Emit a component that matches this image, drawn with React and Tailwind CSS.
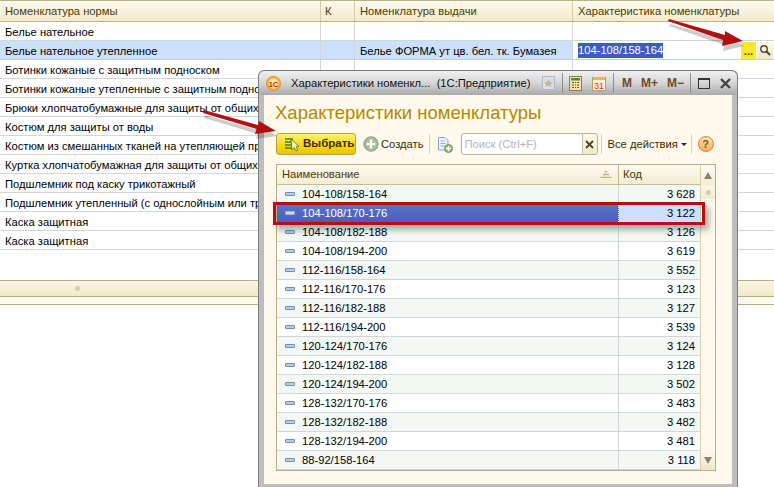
import React from 'react';

const normRows = [
  'Белье нательное',
  'Белье нательное утепленное',
  'Ботинки кожаные с защитным подноском',
  'Ботинки кожаные утепленные с защитным подноском',
  'Брюки хлопчатобумажные для защиты от общих производственных загрязнений',
  'Костюм для защиты от воды',
  'Костюм из смешанных тканей на утепляющей прокладке',
  'Куртка хлопчатобумажная для защиты от общих производственных загрязнений',
  'Подшлемник под каску трикотажный',
  'Подшлемник утепленный (с однослойным или трехслойным)',
  'Каска защитная',
  'Каска защитная',
];

const sizes = [
  ['104-108/158-164', '3 628'],
  ['104-108/170-176', '3 122'],
  ['104-108/182-188', '3 126'],
  ['104-108/194-200', '3 619'],
  ['112-116/158-164', '3 552'],
  ['112-116/170-176', '3 123'],
  ['112-116/182-188', '3 127'],
  ['112-116/194-200', '3 539'],
  ['120-124/170-176', '3 124'],
  ['120-124/182-188', '3 128'],
  ['120-124/194-200', '3 502'],
  ['128-132/170-176', '3 483'],
  ['128-132/182-188', '3 482'],
  ['128-132/194-200', '3 481'],
  ['88-92/158-164', '3 118'],
];

function BackRow({ name, active }) {
  return (
    <div className={`flex h-[19px] border-b ${active ? 'bg-[#cde0fb] border-[#b9d0ea]' : 'bg-white border-[#ced8dc]'}`}>
      <div className="w-[321px] pl-[5px] leading-[20px] whitespace-nowrap overflow-hidden border-r border-[#ced8dc]">{name}</div>
      <div className="w-[34px] border-r border-[#ced8dc]" />
      <div className="w-[218px] pl-[5px] leading-[20px] whitespace-nowrap border-r border-[#ced8dc]">
        {active ? 'Белье ФОРМА ут цв. бел. тк. Бумазея' : ''}
      </div>
      {active ? (
        <div className="flex flex-1 items-center pl-[5px] pr-[1px] bg-white">
          <span className="bg-[#3c5cc4] text-white leading-[15px]">104-108/158-164</span>
          <div className="flex-1" />
          <div className="w-[15px] h-[17px] bg-[#f6ea2c] text-[#5a4a00] font-bold text-center leading-[18px]">...</div>
          <div className="flex w-[16px] h-[17px] ml-[1px] items-center justify-center bg-gradient-to-b from-[#fdf8e6] to-[#efe6c4]">
            <svg width="12" height="12" viewBox="0 0 12 12" fill="none" stroke="#4a4630" strokeWidth="1.4">
              <circle cx="5" cy="5" r="3.2" />
              <path d="M7.5 7.5L11 11" strokeWidth="2" />
            </svg>
          </div>
        </div>
      ) : (
        <div className="flex-1" />
      )}
    </div>
  );
}

function Arrow({ className, width, height, d }) {
  return (
    <svg className={`absolute ${className}`} width={width} height={height} viewBox={`0 0 ${width} ${height}`}>
      <path d={d} fill="#000" opacity="0.2" transform="translate(1 5)" />
      <path d={d} fill="#b30f13" />
    </svg>
  );
}

function LogoIcon() {
  return (
    <svg width="15" height="15" viewBox="0 0 15 15">
      <circle cx="7.5" cy="7.5" r="7" fill="#f4b43c" stroke="#d9902c" />
      <circle cx="7.5" cy="7.5" r="5" fill="#fde6a8" />
      <text x="7.5" y="10.5" textAnchor="middle" fontSize="8" fontWeight="bold" fontFamily="Liberation Sans" fill="#d8261c">1С</text>
    </svg>
  );
}

function TitleBar() {
  return (
    <div className="flex h-[24px] items-center pl-[7px] bg-gradient-to-b from-[#f0f0f0] via-[#d6d6d6] to-[#a9a9a9] rounded-t-[6px]">
      <LogoIcon />
      <span className="ml-[10px] w-[234px] text-[#111] whitespace-nowrap">Характеристики номенкл...&nbsp; (1С:Предприятие)</span>
      <svg className="ml-[17px]" width="13" height="14" viewBox="0 0 13 14">
        <rect x="0.5" y="0.5" width="12" height="13" fill="#d7dfe8" stroke="#aebccb" />
        <path d="M6.5 3L8 6L11 6.4L8.8 8.4L9.4 11L6.5 9.6L3.6 11L4.2 8.4L2 6.4L5 6Z" fill="#c4b890" />
      </svg>
      <div className="w-px h-[20px] ml-[7px] bg-[#8f8f8f]" />
      <svg className="ml-[6px]" width="13" height="15" viewBox="0 0 13 15">
        <rect x="0.5" y="0.5" width="12" height="14" fill="#f4dfae" stroke="#9a7a44" />
        <rect x="2" y="2" width="9" height="2.5" fill="#3e8f3e" />
        <path d="M3 6.5h2M6 6.5h1M8 6.5h2M3 9h2M6 9h1M8 9h2M3 11.5h2M6 11.5h1M8 11.5h2" stroke="#6d5330" />
      </svg>
      <svg className="ml-[10px]" width="14" height="15" viewBox="0 0 14 15">
        <rect x="0.5" y="1.5" width="13" height="13" fill="#fdf3dc" stroke="#c29a62" />
        <rect x="1" y="1" width="12" height="3" fill="#e2b678" />
        <text x="7" y="13" textAnchor="middle" fontSize="9" fontFamily="Liberation Sans" fill="#e0281c">31</text>
      </svg>
      <div className="w-px h-[20px] ml-[7px] bg-[#8f8f8f]" />
      <div className="flex ml-[8px] gap-[9px] text-[12px] font-bold text-[#74492a] leading-none">
        <span>M</span>
        <span>M+</span>
        <span>M−</span>
      </div>
      <div className="w-px h-[20px] ml-[6px] bg-[#8f8f8f]" />
      <div className="w-[12px] h-[11px] ml-[7px] border border-[#333] border-t-2" />
      <svg className="ml-[10px]" width="11" height="11" viewBox="0 0 11 11">
        <path d="M1 1L10 10M10 1L1 10" stroke="#444" strokeWidth="2.4" />
      </svg>
    </div>
  );
}

function Toolbar() {
  return (
    <div className="flex h-[22px] items-center mt-[9px] ml-[12px]">
      <button className="flex w-[80px] h-[22px] items-center pl-[6px] rounded-[3px] border border-[#b5a24a] bg-gradient-to-b from-[#fff16a] via-[#f7dc12] to-[#e8c400] font-bold text-[11.5px] text-[#3d2f00]">
        <svg width="17" height="16" viewBox="0 0 17 16" fill="none">
          <path d="M2 3h8M2 6h8M2 9h8M2 12h8" stroke="#4d7d28" strokeWidth="1.6" />
          <path d="M8 3l1 11 2.2-2.4L13 15l1.8-1-1.8-3.2 3-.4Z" fill="#f6f2b0" stroke="#47701f" strokeWidth="0.8" />
        </svg>
        <span className="ml-[3px]">Выбрать</span>
      </button>
      <svg className="ml-[7px]" width="16" height="16" viewBox="0 0 16 16">
        <circle cx="8" cy="8" r="7.2" fill="#a4bf94" stroke="#8a9a86" />
        <path d="M8 3.6v8.8M3.6 8h8.8" stroke="#fff" strokeWidth="2.4" />
      </svg>
      <span className="ml-[2px] text-[#3a2c00]">Создать</span>
      <div className="w-px h-[20px] ml-[5px] bg-[#d9d2b4]" />
      <svg className="ml-[7px]" width="16" height="17" viewBox="0 0 16 17">
        <path d="M1.5 1.5H8L11 4.5V14H1.5Z" fill="#eef2f8" stroke="#8fa3bf" />
        <path d="M3.5 5h4M3.5 7.5h5M3.5 10h5" stroke="#9ab0cc" />
        <circle cx="11.5" cy="12.5" r="4" fill="#8dbb77" stroke="#709a60" />
        <path d="M11.5 10v5M9 12.5h5" stroke="#fff" strokeWidth="1.4" />
      </svg>
      <div className="flex w-[137px] h-[22px] ml-[8px] rounded-[3px] border border-[#b9b28c] bg-white">
        <span className="flex-1 pl-[3px] text-[#b4b4b4] leading-[20px] whitespace-nowrap">Поиск (Ctrl+F)</span>
        <div className="flex w-[15px] items-center justify-center border-l border-[#c9c3a2] bg-gradient-to-b from-[#fdf9ea] to-[#efe8cc] rounded-r-[3px]">
          <svg width="9" height="9" viewBox="0 0 9 9">
            <path d="M1 1L8 8M8 1L1 8" stroke="#4a4420" strokeWidth="1.8" />
          </svg>
        </div>
      </div>
      <div className="w-px h-[20px] ml-[3px] bg-[#d9d2b4]" />
      <span className="ml-[6px] w-[69px] text-[#3a2c00] whitespace-nowrap">Все действия</span>
      <span className="ml-[4px] w-0 h-0 border-x-[3px] border-x-transparent border-t-[3px] border-t-[#3a2c00]" />
      <div className="w-px h-[20px] ml-[4px] bg-[#d9d2b4]" />
      <div className="flex w-[16px] h-[16px] ml-[6px] items-center justify-center rounded-full border border-[#c48a40] bg-gradient-to-b from-[#fde3b0] to-[#f2aa52] text-[#7a5a2a] font-bold text-[11px] leading-none">?</div>
    </div>
  );
}

function SizeTable() {
  return (
    <div className="flex h-[307px] ml-[12px] mt-[9px] mr-[16px] border border-[#b9ae80] bg-white">
      <div className="flex-1 flex flex-col">
        <div className="flex h-[20px] border-b border-[#c9bd8c] bg-gradient-to-b from-[#fefaf0] to-[#f5ecd2] text-[#4a3a00] leading-[19px]">
          <div className="flex w-[342px] items-center justify-between pl-[5px] pr-[6px] border-r border-[#c9bd8c]">
            <span>Наименование</span>
            <svg width="12" height="7" viewBox="0 0 12 7">
              <path d="M4.5 0.5h3M3 3.5h6M0.5 6.5h11" stroke="#bfb484" strokeWidth="1.4" />
            </svg>
          </div>
          <div className="flex-1 pl-[4px]">Код</div>
        </div>
        {sizes.map(([name, code], i) => {
          const sel = i === 1;
          const rowBg = i % 2 === 0 ? 'bg-[#f3f8f4]' : 'bg-white';
          return (
            <div key={name} className={`flex h-[19px] border-b border-[#ced8dc] ${sel ? 'bg-[#cde0fb]' : rowBg}`}>
              <div className={`flex w-[342px] items-center pl-[8px] border-r ${sel ? 'bg-gradient-to-b from-[#5a72c8] to-[#4a60b8] text-white border-dotted border-white' : 'border-[#ced8dc]'}`}>
                <div className={`w-[10px] h-[4px] rounded-[1px] border ${sel ? 'border-[#a8b4cc] bg-[#c8d4e4]' : 'border-[#6f8eae] bg-[#b7cde2]'}`} />
                <span className="ml-[7px]">{name}</span>
              </div>
              <div className="flex-1 pr-[5px] text-right leading-[18px] whitespace-nowrap">{code}</div>
            </div>
          );
        })}
      </div>
      <div className="flex w-[15px] flex-col border-l border-[#d8d0ac] bg-[#fdf9ec]">
        <div className="flex h-[20px] items-center justify-center bg-gradient-to-b from-[#fefaf0] to-[#f5ecd2]">
          <span className="w-0 h-0 border-x-[4px] border-x-transparent border-b-[7px] border-b-[#85857a]" />
        </div>
        <div className="flex h-[14px] items-center justify-center bg-gradient-to-b from-[#fdf8e6] to-[#f3eace]">
          <div className="w-[5px] h-[5px] rounded-full bg-[#d2d0b8]" />
        </div>
        <div className="flex-1" />
        <div className="flex h-[20px] items-center justify-center bg-gradient-to-b from-[#fefaf0] to-[#efe5c6]">
          <span className="w-0 h-0 border-x-[4px] border-x-transparent border-t-[7px] border-t-[#85857a]" />
        </div>
      </div>
    </div>
  );
}

export default function App() {
  return (
    <div className="relative w-[774px] h-[487px] overflow-hidden bg-white text-[11.2px] text-black font-['Liberation_Sans',sans-serif]">
      {/* back table */}
      <div className="flex h-[22px] border-y border-[#bdb184] bg-gradient-to-b from-[#fefaf0] to-[#f3e9cd] text-[#4a3a00] leading-[20px]">
        <div className="w-[321px] pl-[5px] border-r border-[#d5cba4]">Номенклатура нормы</div>
        <div className="w-[34px] pl-[4px] border-r border-[#d5cba4]">К</div>
        <div className="w-[218px] pl-[5px] border-r border-[#d5cba4]">Номенклатура выдачи</div>
        <div className="flex-1 pl-[5px]">Характеристика номенклатуры</div>
      </div>
      {normRows.map((name, i) => (
        <BackRow key={i} name={name} active={i === 1} />
      ))}

      {/* splitter */}
      <div className="h-[30px]" />
      <div className="relative h-[17px] border-y border-[#b9ae80] bg-gradient-to-b from-[#fbf6e4] to-[#f2e9c8]">
        <div className="absolute left-[75px] top-[5px] w-[5px] h-[5px] rounded-full bg-[#cfcdb4]" />
      </div>
      <div className="h-[8px] border-b border-[#b9ae80] bg-[#fdf9ec]" />

      {/* window */}
      <div className="absolute left-[258px] top-[70px] w-[480px] h-[417px] flex flex-col rounded-t-[6px] border border-b-0 border-[#7c7c7c] bg-[#bdbdbd]">
        <TitleBar />
        <div className="flex-1 mx-[5px] mb-[3px] bg-[#fef9ec]">
          <div className="ml-[11px] mt-[7px] text-[18.5px] leading-[22px] text-[#b18a00] whitespace-nowrap">Характеристики номенклатуры</div>
          <Toolbar />
          <SizeTable />
        </div>
      </div>

      {/* selected row frame */}
      <div className="absolute left-[273px] top-[202px] w-[432px] h-[23px] border-[3px] border-[#b80d12] shadow-[4px_5px_6px_rgba(0,0,0,0.3)]" />

      <Arrow className="left-[200px] top-[105px]" width="78" height="34" d="M3 8L4 5L58 20L59 16L76 26L55 29L56.5 24Z" />
      <Arrow className="left-[666px] top-[16px]" width="80" height="36" d="M2 5L3 3L59 19L59 15L77 25L56 30L57 24Z" />
    </div>
  );
}
